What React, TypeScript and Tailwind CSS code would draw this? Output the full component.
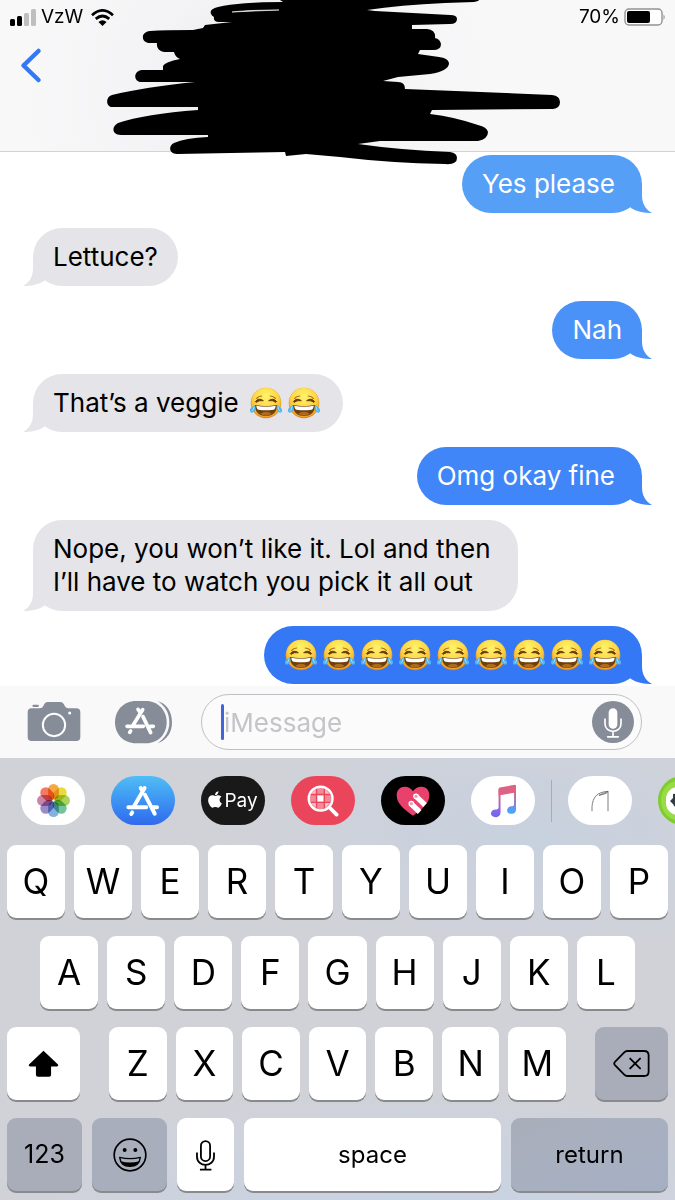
import type { ReactNode } from 'react';
import { FaApple } from 'react-icons/fa';

function JoyFace() {
  return (
    <svg role="img" aria-label="😂" viewBox="0 0 100 96" className="h-8 w-[34px] shrink-0">
      <circle cx="50" cy="48" r="46" fill="url(#faceEdge)" />
      <circle cx="50" cy="47" r="44" fill="url(#face)" />
      <path d="M18 44 Q28 31 42 41 Q29 39 20 46 Z M82 44 Q72 31 58 41 Q71 39 80 46 Z" fill="#6b3a09" stroke="#6b3a09" strokeWidth="3" strokeLinejoin="round" />
      <path d="M22 34 Q28 27 37 27 M78 34 Q72 27 63 27" stroke="#a5660f" strokeWidth="3.5" fill="none" strokeLinecap="round" />
      <path d="M17 54 Q50 61 83 54 Q83 86 50 87 Q17 86 17 54Z" fill="#6f3f0c" />
      <path d="M21 56 Q50 62 79 56 Q78 67 72 68 Q50 71 28 68 Q22 67 21 56Z" fill="#fff" />
      <path d="M33 80 Q50 68 67 80 Q60 86 50 86 Q40 86 33 80Z" fill="#b06a1c" />
      <path d="M17 54 Q21 68 13 75 Q5 80 2 73 Q-1 64 17 54Z" fill="#4fb4f0" />
      <path d="M83 54 Q79 68 87 75 Q95 80 98 73 Q101 64 83 54Z" fill="#4fb4f0" />
      <path d="M14 60 Q14 68 8 72 M86 60 Q86 68 92 72" stroke="#a6defc" strokeWidth="3" fill="none" strokeLinecap="round" />
    </svg>
  );
}

function JoyRow({ count }: { count: number }) {
  return (
    <span className="inline-flex h-[33px] items-center gap-1 align-top">
      {Array.from({ length: count }, (_, i) => (
        <JoyFace key={i} />
      ))}
    </span>
  );
}

function Bubble({ side, tone, pad = 'px-5', children }: { side: 'in' | 'out'; tone: string; pad?: string; children: ReactNode }) {
  const sent = side === 'out';
  return (
    <li className={sent ? 'flex justify-end' : 'flex justify-start'}>
      <div className={`relative max-w-[490px] rounded-[29px] bg-[var(--tone)] pt-3 pb-[13px] ${pad} ${sent ? 'text-white' : 'text-black'} ${tone}`}>
        {children}
        <svg
          aria-hidden="true"
          viewBox="-20 -30 30 30"
          className={`absolute bottom-0 h-[30px] w-[30px] ${sent ? '-right-[10px]' : '-left-[10px] -scale-x-100'}`}
        >
          <path className="fill-[var(--tone)]" d="M0 -29 V-18 C0 -10 3 -4 10 0 C3 0 -5 -1 -11 -5 L-18 -14 Z" />
        </svg>
      </div>
    </li>
  );
}

function AppStoreGlyph({ className }: { className: string }) {
  return (
    <svg aria-hidden="true" viewBox="380 310 104 98" className={className} fill="none" stroke="#fff" strokeWidth="12" strokeLinecap="round">
      <path d="M437 319 L405 374 M425 319 L430 328 M438 340 L468 398 M387 378 H442 M463 378 H475 M399 394 L396 399" />
    </svg>
  );
}

function Pill({ label, tone, children }: { label: string; tone: string; children: ReactNode }) {
  return (
    <button type="button" aria-label={label} className={`flex h-[49px] w-16 shrink-0 items-center justify-center overflow-hidden rounded-[25px] ${tone}`}>
      {children}
    </button>
  );
}

const petals = ['#f59a1e', '#e4d51d', '#9ccb3c', '#5cb98a', '#6ba5dc', '#8878c0', '#c0719f', '#ee6348'];

function Key({ label, size = 'flex-1 basis-0 text-[35px]', tone = 'bg-white', children }: { label?: string; size?: string; tone?: string; children: ReactNode }) {
  return (
    <button
      type="button"
      aria-label={label}
      className={`flex h-[73px] min-w-0 items-center justify-center rounded-[9px] text-black shadow-[0_2px_0_#898a8d] ${size} ${tone}`}
    >
      {children}
    </button>
  );
}

function Letters({ row }: { row: string }) {
  return (
    <>
      {row.split('').map((c) => (
        <Key key={c}>{c}</Key>
      ))}
    </>
  );
}

function Redaction() {
  return (
    <svg aria-hidden="true" viewBox="0 0 675 170" className="pointer-events-none absolute top-0 left-0 z-10 w-full">
      <path d="M280 0 L283 2 Q240 2 218 7 Q209 9 211 14 Q212 16 214 17 Q213 22 219 22 L232 22 L205 25 L203 28 L193 30 Q165 30 150 31 C140 32 141 43 150 43 L157 43 C156 50 162 52 166 52 L174 52 Q175 57 180 59 Q165 62 163 66 L163 70 L142 70 C133 71 133 82 142 82 L195 82 Q145 87 112 95 C105 97 106 107 112 107 L198 107 L198 110 Q145 114 118 123 C111 127 112 135 121 135 L208 135 L208 137 Q185 138 174 143 C168 146 169 154 177 154 L285 152 L286 156 L306 154 L340 157 Q390 163 445 164 Q457 165 457 158 Q457 153 450 152 Q400 150 358 144 L380 141 L478 141 Q488 139 488 132 Q487 127 478 125 Q455 117 430 114 L432 110 L553 109 Q560 108 560 102 Q560 96 552 95 L405 89 Q405 82 398 82 L383 81 L398 77 L430 74 Q449 71 449 63 Q448 58 439 57 L418 54 L420 50 L433 50 Q441 50 441 44 Q440 39 435 38 Q436 30 427 29 L412 29 L412 25 L450 24 Q457 24 457 19 Q457 15 450 15 L375 11 L367 10 Q400 5 445 3 L474 2 Q479 1 479 0 Z" fill="#000" />
      <path d="M232 12 Q248 10 279 10 Q255 11 232 12Z" fill="#fff" stroke="#fff" strokeWidth="0.6" />
    </svg>
  );
}

export default function App() {
  return (
    <div className="relative flex min-h-screen flex-col overflow-hidden bg-white font-['Inter','Liberation_Sans',sans-serif]">
      <svg aria-hidden="true" className="absolute h-0 w-0">
        <defs>
          <radialGradient id="face" cx="0.5" cy="0.28" r="0.72">
            <stop offset="0" stopColor="#fff36b" />
            <stop offset="0.55" stopColor="#fed848" />
            <stop offset="1" stopColor="#ee9e25" />
          </radialGradient>
          <linearGradient id="faceEdge" x1="0" y1="0" x2="0" y2="1">
            <stop offset="0" stopColor="#f1b940" />
            <stop offset="1" stopColor="#d78420" />
          </linearGradient>
          <linearGradient id="note" x1="0" y1="0" x2="0" y2="1">
            <stop offset="0.2" stopColor="#d9628a" />
            <stop offset="0.6" stopColor="#a565d0" />
            <stop offset="0.9" stopColor="#7366f5" />
          </linearGradient>
          <linearGradient id="noteRight" x1="0" y1="0" x2="0" y2="1">
            <stop offset="0.2" stopColor="#d9628a" />
            <stop offset="0.6" stopColor="#8f7fd5" />
            <stop offset="0.9" stopColor="#4ba3fa" />
          </linearGradient>
        </defs>
      </svg>
      <Redaction />

      <header className="flex h-[152px] flex-col border-b border-[#d3d3d5] bg-[radial-gradient(circle_at_38%_60%,#eaeaee_0%,#f3f3f5_25%,#f8f8f9_55%)]">
        <div className="flex h-[34px] items-center justify-between pr-2 pl-[10px] text-[19px] leading-[34px] text-black">
          <div className="flex items-center">
            <svg aria-label="Signal strength" viewBox="0 0 27 17" className="h-[17px] w-[27px]">
              <rect x="0" y="10" width="5" height="7" rx="1.5" />
              <rect x="7" y="7" width="5" height="10" rx="1.5" />
              <rect x="14" y="4" width="5" height="13" rx="1.5" fill="#bfbfc1" />
              <rect x="21" y="0" width="5" height="17" rx="1.5" fill="#bfbfc1" />
            </svg>
            <span className="ml-1">VzW</span>
            <svg aria-label="Wi-Fi" viewBox="0 0 68 50" className="ml-2 h-[17px] w-[23px]">
              <g fill="none" stroke="#000" strokeWidth="8">
                <path d="M3 18 Q34 -10 65 18" />
                <path d="M14 29 Q34 12 54 29" />
              </g>
              <path d="M22 38 Q34 28 46 38 L34 50Z" />
            </svg>
          </div>
          <div className="flex items-center">
            <span>70%</span>
            <svg aria-label="Battery" viewBox="0 0 43 18" className="ml-1 h-[18px] w-[43px]">
              <rect x="1" y="1" width="37" height="16" rx="4" fill="#fff" stroke="#929294" strokeWidth="1.4" />
              <rect x="3" y="3" width="23" height="12" rx="2" />
              <path d="M39.5 6.5 Q42 9 39.5 12Z" fill="#929294" />
            </svg>
          </div>
        </div>
        <button type="button" aria-label="Back" className="mt-3 ml-5 h-10 w-6">
          <svg aria-hidden="true" viewBox="0 0 24 40" className="h-10 w-6" fill="none" stroke="#3478f6" strokeWidth="4.5" strokeLinecap="round" strokeLinejoin="round">
            <path d="M18.5 5 L3.5 19.5 L18.5 34" />
          </svg>
        </button>
      </header>

      <ul className="flex flex-col gap-[15px] px-[33px] pt-[3px] pb-[2px] text-[26px] leading-[33px]">
        <Bubble side="out" pad="pl-5 pr-[27px]" tone="[--tone:#569ff7]">Yes please</Bubble>
        <Bubble side="in" tone="[--tone:#e4e4e9]">Lettuce?</Bubble>
        <Bubble side="out" tone="[--tone:#4a92f8]">Nah</Bubble>
        <Bubble side="in" pad="pl-5 pr-[22px]" tone="[--tone:#e4e4e9]">
          That’s a veggie{' '}
          <span className="ml-[3px]">
            <JoyRow count={2} />
          </span>
        </Bubble>
        <Bubble side="out" pad="pl-5 pr-[27px]" tone="[--tone:#4086f8]">Omg okay fine</Bubble>
        <Bubble side="in" pad="pl-5 pr-[27px]" tone="[--tone:#e4e4e9]">
          Nope, you won’t like it. Lol and then
          <br />
          I’ll have to watch you pick it all out
        </Bubble>
        <Bubble side="out" tone="[--tone:#3478f6]">
          <JoyRow count={9} />
        </Bubble>
      </ul>

      <form className="flex h-[72px] items-center bg-[#f9f9fa] pr-[33px] pl-[27px]">
        <button type="button" aria-label="Camera" className="shrink-0">
          <svg aria-hidden="true" viewBox="80 65 165 126" className="h-[42px] w-[55px]" fill="#868c98">
            <path d="M94 87 H118 Q126 87 129 80 L132 74 Q135 68 142 68 H180 Q187 68 190 74 L194 81 Q197 87 204 87 H228 Q240 87 240 99 V173 Q240 185 228 185 H94 Q82 185 82 173 V99 Q82 87 94 87Z" />
            <rect x="97" y="76" width="18" height="7" rx="2" />
            <circle cx="161" cy="137" r="33.5" fill="none" stroke="#fff" strokeWidth="6" />
            <circle cx="208" cy="101" r="4.5" fill="#fff" />
          </svg>
        </button>
        <button type="button" aria-label="Apps" className="ml-8 flex shrink-0 items-center">
          <svg aria-hidden="true" viewBox="342 60 177 132" className="h-11 w-[59px]">
            <path d="M472 63 C500 70 516 95 516 127 C516 158 500 181 472 190 C494 176 508 155 508 127 C508 98 495 77 472 63Z" fill="#868c98" />
            <path d="M408 63 H438 C475 63 500 92 500 127 C500 162 475 190 438 190 H408 C370 190 345 162 345 127 C345 92 370 63 408 63Z" fill="#868c98" />
            <g fill="none" stroke="#fff" strokeWidth="11" strokeLinecap="round">
              <path d="M428 89 L400 134 M414 88 L420 97 M429 110 L452 158 M381 139 H430 M451 139 H460 M392 153 L389 157" />
            </g>
          </svg>
        </button>
        <div className="relative ml-7 flex h-14 min-w-0 flex-1 items-center rounded-full border border-[#bfbfc5] bg-[#fbfbfc] pr-[7px] pl-[22px]">
          <span aria-hidden="true" className="absolute left-[19px] h-9 w-[3px] rounded-full bg-[#4263d9]" />
          <input aria-label="Message" placeholder="iMessage" className="h-full min-w-0 flex-1 bg-transparent text-[26px] text-black outline-none placeholder:text-[#c4c4c9]" />
          <button type="button" aria-label="Record audio" className="flex h-[42px] w-[42px] shrink-0 items-center justify-center rounded-full bg-[#868c98]">
            <svg aria-hidden="true" viewBox="0 0 54 92" className="h-[31px] w-[18px]" fill="none" stroke="#fff" strokeWidth="5" strokeLinecap="round">
              <rect x="14" y="3" width="26" height="62" rx="13" fill="#fff" stroke="none" />
              <path d="M3 36 V50 C3 80 51 80 51 50 V36 M27 73 V88 M11 89 H43" />
            </svg>
          </button>
        </div>
      </form>

      <section
        aria-label="Keyboard"
        className="flex-1 bg-[#d1d2d8] bg-[radial-gradient(ellipse_45%_30%_at_78%_17%,#c8d1df_0%,transparent_100%),radial-gradient(ellipse_60%_30%_at_60%_104%,#c6d3e5_0%,transparent_100%)]"
      >
        <nav aria-label="iMessage apps" className="flex items-center overflow-hidden pt-[18px] pb-5 pl-[21px]">
          <div className="flex shrink-0 gap-[26px]">
            <Pill label="Photos" tone="bg-white">
              <svg aria-hidden="true" viewBox="-52 -52 104 104" className="h-[35px] w-[35px]">
                {petals.map((c, i) => (
                  <rect key={c} x="-16" y="-49" width="32" height="46" rx="16" fill={c} fillOpacity="0.85" className="mix-blend-multiply" transform={`rotate(${i * 45})`} />
                ))}
              </svg>
            </Pill>
            <Pill label="App Store" tone="bg-linear-to-b from-[#51bdf5] to-[#3268ed]">
              <AppStoreGlyph className="h-8 w-[34px]" />
            </Pill>
            <Pill label="Apple Pay" tone="bg-[#191919] text-white">
              <FaApple aria-hidden="true" className="mb-[2px] h-[19px] w-[14px]" />
              <span className="ml-[2px] text-[19px] leading-6">Pay</span>
            </Pill>
            <Pill label="#images" tone="bg-[#eb455c]">
              <svg aria-hidden="true" viewBox="0 0 94 94" className="h-8 w-8">
                <circle cx="40" cy="40" r="35" fill="#f28b98" />
                <g fill="#fff">
                  <rect x="30" y="30" width="19" height="19" />
                  <path d="M10 27 L26 13 V27Z M52 10 L67 27 H52Z M12 52 H27 V68Z M52 52 H68 L52 68Z" opacity="0.45" />
                </g>
                <path d="M28 7 V73 M51 7 V73 M7 28 H73 M7 51 H73" stroke="#eb455c" strokeWidth="4" />
                <circle cx="40" cy="40" r="35" fill="none" stroke="#fff" strokeWidth="7" />
                <path d="M66 66 L87 87" stroke="#fff" strokeWidth="11" strokeLinecap="round" />
              </svg>
            </Pill>
            <Pill label="Digital Touch" tone="bg-black">
              <svg aria-hidden="true" viewBox="167 52 102 90" className="h-[30px] w-[34px]">
                <path d="M218 141 C190 122 169 104 169 80 C169 63 180 54 193 54 C204 54 213 60 218 68 C223 60 232 54 243 54 C257 54 267 63 267 80 C267 104 246 122 218 141Z" fill="#e8416c" />
                <path d="M228 84 L254 109 M213 106 L238 130" stroke="#fff" strokeWidth="16" />
                <circle cx="227" cy="83" r="8.5" fill="#fff" />
                <circle cx="213" cy="105" r="8.5" fill="#fff" />
                <circle cx="227" cy="83" r="5" fill="#ef9bb1" />
                <circle cx="213" cy="105" r="5" fill="#ef9bb1" />
              </svg>
            </Pill>
            <Pill label="Music" tone="bg-white">
              <svg aria-hidden="true" viewBox="440 40 82 102" className="h-[34px] w-[27px]">
                <path d="M466 55 H472 V125 C472 136 464 140 457 140 C448 140 443 135 443 129 C443 121 450 117 457 117 C462 117 466 116 466 111Z" fill="url(#note)" />
                <path d="M513 46 H519 V116 C519 127 512 130 505 130 C496 130 492 126 492 120 C492 112 499 107 505 107 C510 107 513 106 513 101Z" fill="url(#noteRight)" />
                <path d="M466 55 Q466 51 470 50 L515 42 Q519 42 519 46 V65 L466 74Z" fill="#dc6383" />
              </svg>
            </Pill>
          </div>
          <span aria-hidden="true" className="mx-4 h-[42px] w-px shrink-0 bg-[#a9acb3]" />
          <div className="flex shrink-0 gap-[26px]">
            <Pill label="Sketch" tone="bg-white">
              <svg aria-hidden="true" viewBox="0 0 54 66" className="h-[22px] w-[18px]" fill="none" stroke="#666" strokeWidth="2.5">
                <path d="M3 64 V50 C5 22 18 6 51 4 L51 64 M24 16 L51 4 L46 10 L24 16" />
              </svg>
            </Pill>
            <Pill label="Games" tone="bg-[#7fcb30]">
              <svg aria-hidden="true" viewBox="0 0 64 49" className="h-[49px] w-16">
                <rect x="3" y="4" width="58" height="41" rx="20" fill="#98dc45" />
                <rect x="8" y="11" width="48" height="28" rx="12" fill="#fff" />
                <path d="M12 25 L15 22 L15 18 L25 17 V33 Q17 33 15 28Z" fill="#333c42" />
              </svg>
            </Pill>
          </div>
        </nav>

        <div className="flex flex-col gap-[18px] pb-2">
          <div className="flex gap-[9px] px-[7px]">
            <Letters row="QWERTYUIOP" />
          </div>
          <div className="flex gap-[9px] px-10">
            <Letters row="ASDFGHJKL" />
          </div>
          <div className="flex gap-[29px] px-[7px]">
            <Key label="Shift" size="w-[73px] shrink-0">
              <svg aria-hidden="true" viewBox="0 0 94 82" className="h-[27px] w-[31px]">
                <path d="M47 2 L91 44 Q94 49 88 50 H70 V75 Q70 81 64 81 H30 Q24 81 24 75 V50 H6 Q0 49 3 44Z" />
              </svg>
            </Key>
            <div className="flex min-w-0 flex-1 gap-[9px]">
              <Letters row="ZXCVBNM" />
            </div>
            <Key label="Delete" size="w-[73px] shrink-0" tone="bg-[#a9adb9]">
              <svg aria-hidden="true" viewBox="0 0 112 82" className="h-[27px] w-[37px]" fill="none" stroke="#000" strokeWidth="5.5" strokeLinecap="round" strokeLinejoin="round">
                <path d="M43 3 H94 Q108 3 108 16 V66 Q108 79 94 79 H43 Q38 79 34 75 L5 45 Q2 41 5 37 L34 7 Q38 3 43 3Z M52 26 L82 56 M82 26 L52 56" />
              </svg>
            </Key>
          </div>
          <div className="flex gap-[10px] px-[7px]">
            <Key size="w-[75px] shrink-0 text-[25px]" tone="bg-[#a9adb9]">123</Key>
            <Key label="Emoji" size="w-[75px] shrink-0" tone="bg-[#a8aebc]">
              <svg aria-hidden="true" viewBox="0 0 102 102" className="h-[34px] w-[34px]">
                <circle cx="51" cy="51" r="47.5" fill="none" stroke="#000" strokeWidth="5" />
                <circle cx="35" cy="36" r="6" />
                <circle cx="67" cy="36" r="6" />
                <path d="M20 58 Q51 66 82 58 Q79 85 51 85 Q23 85 20 58Z" stroke="#000" strokeWidth="4" fill="none" strokeLinejoin="round" />
                <path d="M23 70 Q51 77 79 70 Q72 85 51 85 Q30 85 23 70Z" />
              </svg>
            </Key>
            <Key label="Dictate" size="w-[57px] shrink-0">
              <svg aria-hidden="true" viewBox="0 0 58 94" className="mt-[2px] h-[31px] w-[19px]" fill="none" stroke="#000" strokeWidth="5.5">
                <rect x="15" y="3" width="28" height="61" rx="14" />
                <path d="M3 38 V50 C3 84 55 84 55 50 V38 M29 76 V90 M12 90 H47" />
              </svg>
            </Key>
            <Key size="min-w-0 flex-1 text-[24px]">space</Key>
            <Key size="w-[157px] shrink-0 text-[24px]" tone="bg-linear-to-br from-[#a9adb9] via-[#a8b0c0] to-[#a4afc2]">return</Key>
          </div>
        </div>
      </section>
    </div>
  );
}
